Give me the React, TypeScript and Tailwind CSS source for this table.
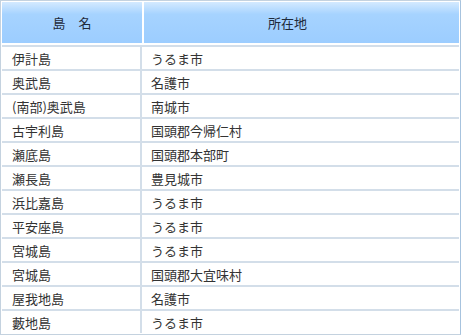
import React from "react";

const rows: [string, string][] = [
  ["伊計島", "うるま市"],
  ["奥武島", "名護市"],
  ["(南部)奥武島", "南城市"],
  ["古宇利島", "国頭郡今帰仁村"],
  ["瀬底島", "国頭郡本部町"],
  ["瀬長島", "豊見城市"],
  ["浜比嘉島", "うるま市"],
  ["平安座島", "うるま市"],
  ["宮城島", "うるま市"],
  ["宮城島", "国頭郡大宜味村"],
  ["屋我地島", "名護市"],
  ["藪地島", "うるま市"],
];

export default function App() {
  return (
    <div
      className="w-[462px] h-[335px] bg-white text-[#333333] text-[13px]"
      style={{ fontFamily: '"Noto Sans CJK JP", "Noto Sans", sans-serif' }}
    >
      <div className="w-[461px] border border-[#c4d2df] border-r-[#a7c3de] p-px bg-white">
        <div className="flex gap-[2px] h-[41px]">
          <div className="w-[140px] flex items-center justify-center bg-[linear-gradient(to_bottom,#d4eaff_0%,#a6d3ff_30%,#9ccdff_100%)] text-[#1f2a3a]">
            島　名
          </div>
          <div className="flex-1 flex items-center pl-[124px] bg-[linear-gradient(to_bottom,#d4eaff_0%,#a6d3ff_30%,#9ccdff_100%)] text-[#1f2a3a]">
            所在地
          </div>
        </div>
        <div className="mt-[2px]">
          {rows.map(([a, b], i) => (
            <div
              key={i}
              className="grid grid-cols-[140px_1fr] h-[24px] border-t-2 border-[#d3dee9]"
            >
              <div className="flex items-center pl-[10px] border-r-2 border-[#d3dee9] leading-none">
                {a}
              </div>
              <div className="flex items-center pl-[9px] leading-none">{b}</div>
            </div>
          ))}
        </div>
      </div>
    </div>
  );
}
